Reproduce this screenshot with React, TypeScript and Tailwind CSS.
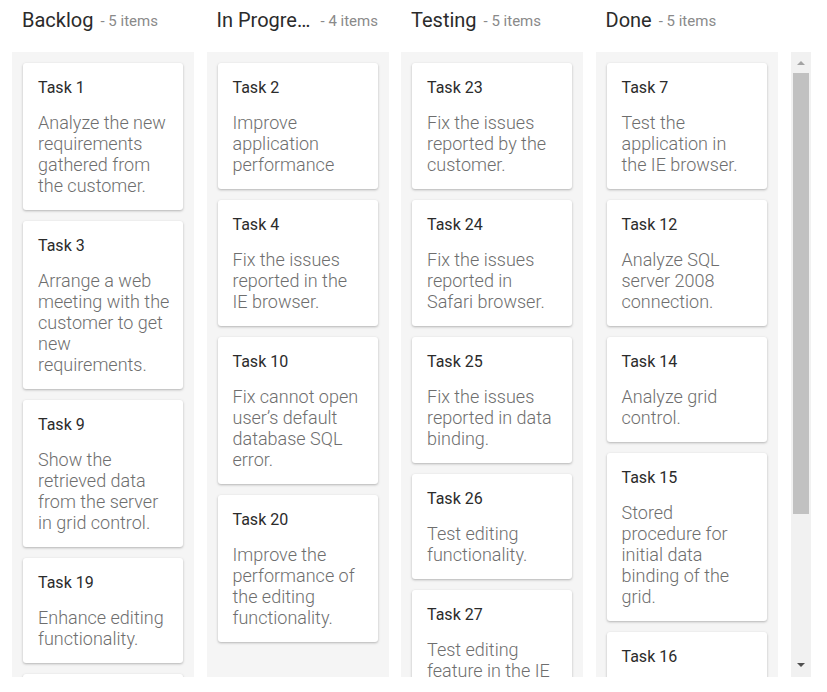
import React from "react";

type Card = { id: string; lines: string[] };
type Column = { title: string; count: number; cards: Card[] };

const columns: Column[] = [
  {
    title: "Backlog",
    count: 5,
    cards: [
      { id: "Task 1", lines: ["Analyze the new", "requirements", "gathered from", "the customer."] },
      { id: "Task 3", lines: ["Arrange a web", "meeting with the", "customer to get", "new", "requirements."] },
      { id: "Task 9", lines: ["Show the", "retrieved data", "from the server", "in grid control."] },
      { id: "Task 19", lines: ["Enhance editing", "functionality."] },
      { id: "Task 11", lines: ["Arrange web", "meeting with", "customer."] },
    ],
  },
  {
    title: "In Progress",
    count: 4,
    cards: [
      { id: "Task 2", lines: ["Improve", "application", "performance"] },
      { id: "Task 4", lines: ["Fix the issues", "reported in the", "IE browser."] },
      { id: "Task 10", lines: ["Fix cannot open", "user’s default", "database SQL", "error."] },
      { id: "Task 20", lines: ["Improve the", "performance of", "the editing", "functionality."] },
    ],
  },
  {
    title: "Testing",
    count: 5,
    cards: [
      { id: "Task 23", lines: ["Fix the issues", "reported by the", "customer."] },
      { id: "Task 24", lines: ["Fix the issues", "reported in", "Safari browser."] },
      { id: "Task 25", lines: ["Fix the issues", "reported in data", "binding."] },
      { id: "Task 26", lines: ["Test editing", "functionality."] },
      { id: "Task 27", lines: ["Test editing", "feature in the IE", "browser."] },
    ],
  },
  {
    title: "Done",
    count: 5,
    cards: [
      { id: "Task 7", lines: ["Test the", "application in", "the IE browser."] },
      { id: "Task 12", lines: ["Analyze SQL", "server 2008", "connection."] },
      { id: "Task 14", lines: ["Analyze grid", "control."] },
      { id: "Task 15", lines: ["Stored", "procedure for", "initial data", "binding of the", "grid."] },
      { id: "Task 16", lines: ["Analyze stored", "procedures."] },
    ],
  },
];

function KanbanCard({ card }: { card: Card }) {
  return (
    <div className="shrink-0 bg-white rounded-[3px] shadow-[0_1px_3px_rgba(0,0,0,0.18),0_1px_2px_rgba(0,0,0,0.1)] px-[15px] pt-[15px] pb-[14px]">
      <div className="text-[16px] leading-[20px] text-[#2b2b2b]">{card.id}</div>
      <div className="mt-[14px] text-[18px] leading-[21px] font-light text-[#6e6e6e]">
        {card.lines.map((l, i) => (
          <div key={i} className="whitespace-nowrap">
            {l}
          </div>
        ))}
      </div>
    </div>
  );
}

export default function App() {
  return (
    <div
      className="w-[827px] h-[692px] bg-white overflow-hidden"
      style={{ fontFamily: "Roboto, 'Noto Sans', sans-serif" }}
    >
      <div className="flex h-[40px] pl-[12px] gap-[12.5px]">
        {columns.map((c) => (
          <div key={c.title} className="w-[182px] px-[10px] flex items-center">
            <span className="max-w-[97px] truncate text-[20px] leading-[24px] text-[#2b2b2b]">
              {c.title}
            </span>
            <span className="ml-[7px] whitespace-nowrap text-[15px] leading-[20px] text-[#8a8a8a] pt-[1px]">
              - {c.count} items
            </span>
          </div>
        ))}
      </div>
      <div className="mt-[12px] flex h-[625px]">
        <div className="flex pl-[12px] gap-[12.5px] h-full">
          {columns.map((c) => (
            <div
              key={c.title}
              className="w-[182px] h-full bg-[#f5f5f5] px-[11px] pt-[11px] flex flex-col gap-[11px] overflow-hidden"
            >
              {c.cards.map((card) => (
                <KanbanCard key={card.id} card={card} />
              ))}
            </div>
          ))}
        </div>
        <div className="ml-[13px] w-[20px] h-full bg-[#f1f1f1] flex flex-col items-center">
          <div className="h-[21px] w-full flex items-center justify-center">
            <div className="w-0 h-0 border-l-[4px] border-r-[4px] border-b-[4px] border-l-transparent border-r-transparent border-b-[#a3a3a3]" />
          </div>
          <div className="w-[16px] h-[441px] bg-[#c1c1c1]" />
          <div className="flex-1" />
          <div className="h-[24px] w-full flex items-center justify-center">
            <div className="w-0 h-0 border-l-[4px] border-r-[4px] border-t-[4px] border-l-transparent border-r-transparent border-t-[#505050]" />
          </div>
        </div>
      </div>
    </div>
  );
}
